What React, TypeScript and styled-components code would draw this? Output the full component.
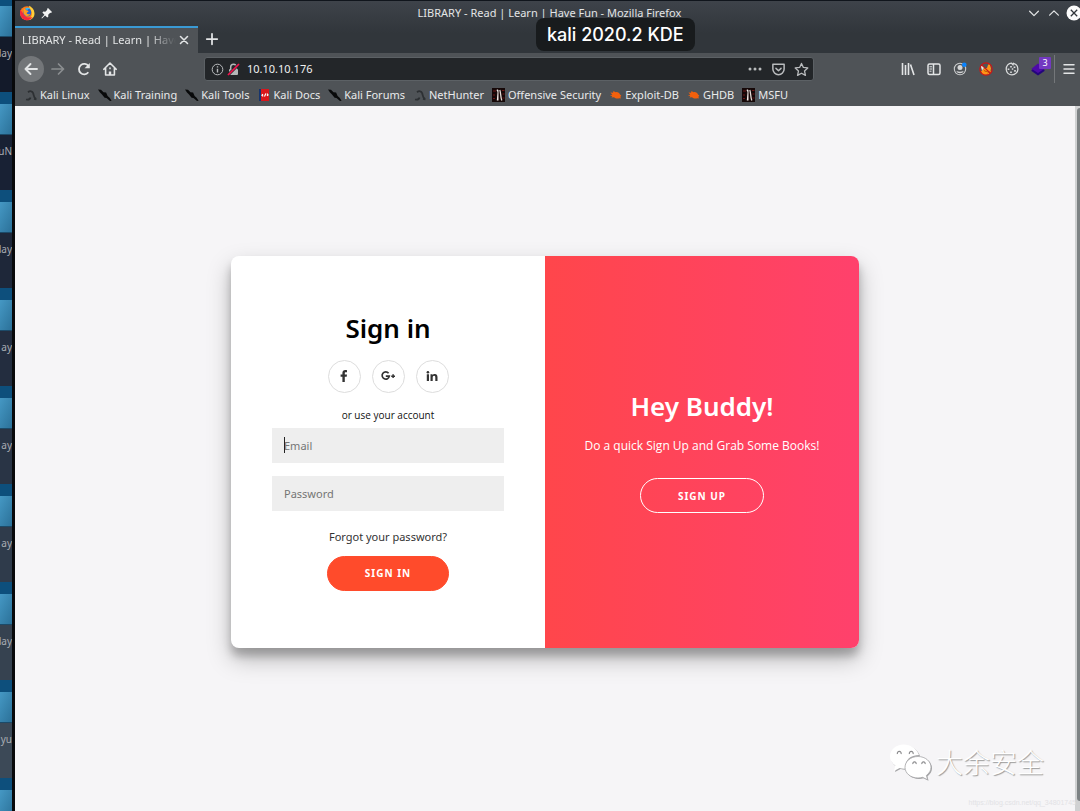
import React from "react";
import styled, { createGlobalStyle } from "styled-components";

const Global = createGlobalStyle`
  * { box-sizing: border-box; }
  body { margin: 0; font-family: "Noto Sans", "Open Sans", sans-serif; background: #f6f5f7; }
  button, input { font-family: inherit; }
  svg { display: block; flex: none; }
`;

const Screen = styled.div`
  position: relative;
  display: flex;
  min-height: 100vh;
  overflow: hidden;
`;

/* ---------- desktop behind the window ---------- */
const Desktop = styled.aside`
  flex: none;
  width: 15px;
  height: 100vh;
  overflow: hidden;
  border-right: 3px solid #08090b;
  background: #131a2a;
`;
const DesktopTile = styled.div<{ $tone: string }>`
  height: 98px;
  border-top: 12px solid #0d4f7c;
  background: ${(p) => p.$tone};
  &:first-child { height: 92px; border-top-width: 6px; }
`;
const Folder = styled.div`
  height: 31px;
  border-bottom: 1px solid #1c4a68;
  background: linear-gradient(115deg, #4598c4, #2b7199);
`;
const FolderLabel = styled.div`
  display: flex;
  justify-content: flex-end;
  padding-top: 8px;
  font-size: 10px;
  line-height: 16px;
  color: #a9adb3;
  white-space: nowrap;
`;

/* ---------- window frame ---------- */
const Window = styled.div`
  flex: 1;
  min-width: 0;
  display: flex;
  flex-direction: column;
  border-top: 1px solid #10151c;
`;
const Chrome = styled.header`
  background: linear-gradient(#3e434a, #31363b 32px);
  color: #e3e5e6;
`;
const TitleBar = styled.div`
  display: grid;
  grid-template-columns: 1fr auto 1fr;
  align-items: center;
  height: 25px;
  padding: 0 0 2px 4px;
`;
const TitleIcons = styled.div`
  display: flex;
  align-items: center;
  gap: 6px;
`;
const WindowTitle = styled.div`
  font-size: 11px;
  line-height: 16px;
  white-space: nowrap;
`;
const WindowButtons = styled.div`
  display: flex;
  justify-content: flex-end;
  align-items: center;
  gap: 5px;
  margin-right: -2px;
`;
const IconButton = styled.button<{ $w?: number }>`
  flex: none;
  display: flex;
  align-items: center;
  justify-content: center;
  width: ${(p) => p.$w ?? 16}px;
  height: 16px;
  padding: 0;
  border: 0;
  background: none;
  color: inherit;
`;
const TabBar = styled.div`
  display: flex;
  align-items: stretch;
  height: 27px;
`;
const Tab = styled.div`
  display: flex;
  align-items: center;
  width: 183px;
  padding: 0 6px 2px 7px;
  border-top: 2px solid #3a9ad4;
  background: #4f5357;
`;
const TabLabel = styled.span`
  flex: 1;
  min-width: 0;
  overflow: hidden;
  white-space: nowrap;
  font-size: 11px;
  line-height: 16px;
  mask-image: linear-gradient(90deg, #000 82%, transparent);
`;
const NewTab = styled(IconButton)`
  width: 28px;
  height: 25px;
`;
const Toolbar = styled.div`
  display: flex;
  align-items: center;
  height: 32px;
  padding: 0 3px;
  background: #4f5357;
`;
const NavGroup = styled.div`
  display: flex;
  align-items: center;
  gap: 10px;
  width: 186px;
`;
const BackButton = styled(IconButton)`
  width: 26px;
  height: 26px;
  border-radius: 50%;
  background: #737679;
  margin-right: -4px;
`;
const UrlBar = styled.div`
  flex: 1;
  display: flex;
  align-items: center;
  gap: 3px;
  height: 24px;
  padding: 0 4px 0 6px;
  border: 1px solid #5c6165;
  border-radius: 3px;
  background: #232629;
  color: #b9bbbd;
`;
const UrlInput = styled.input`
  flex: 1;
  min-width: 0;
  padding: 0 0 0 4px;
  border: 0;
  outline: 0;
  background: none;
  color: #eff0f1;
  font-size: 11px;
  line-height: 16px;
`;
const UrlActions = styled.div`
  display: flex;
  gap: 7px;
`;
const Extensions = styled.div`
  display: flex;
  align-items: center;
  gap: 10px;
  padding: 0 8px 0 86px;
`;
const BadgeHost = styled.div`
  position: relative;
`;
const Badge = styled.span`
  position: absolute;
  top: -4px;
  right: -5px;
  width: 12px;
  height: 12px;
  border-radius: 1px;
  background: #7339c1;
  color: #fff;
  font-size: 9px;
  line-height: 12px;
  text-align: center;
`;
const MenuArea = styled.div`
  display: flex;
  align-items: center;
  height: 28px;
  padding-left: 6px;
  border-left: 1px solid #74777a;
`;
const Bookmarks = styled.nav`
  display: flex;
  align-items: center;
  gap: 8px;
  height: 21px;
  padding: 0 9px 2px;
  background: #4f5357;
`;
const Bookmark = styled.a`
  display: flex;
  align-items: center;
  gap: 2px;
  color: #e9eaeb;
  font-size: 11px;
  line-height: 16px;
  white-space: nowrap;
  text-decoration: none;
`;
const HostLabel = styled.div`
  position: absolute;
  top: 18px;
  left: 50%;
  margin-left: -4px;
  padding: 4px 11px;
  border-radius: 8px;
  background: #181b1d;
  color: #fff;
  font-family: Inter, sans-serif;
  font-size: 18px;
  font-weight: 500;
  line-height: 25px;
  white-space: nowrap;
`;

/* ---------- web page ---------- */
const Viewport = styled.div`
  flex: 1;
  display: flex;
  background: #f6f5f7;
`;
const Page = styled.main`
  flex: 1;
  display: flex;
  align-items: center;
  justify-content: center;
  padding: 20px 20px 34px;
`;
const Scrollbar = styled.div`
  width: 5px;
  padding: 2px 0 10px 2px;
  background: #d0d1d2;
`;
const ScrollThumb = styled.div`
  height: 100%;
  border-radius: 3px 0 0 3px;
  background: #7d8284;
`;
const Card = styled.div`
  display: grid;
  grid-template-columns: 1fr 1fr;
  width: 100%;
  max-width: 628px;
  min-height: 392px;
  overflow: hidden;
  border-radius: 8px;
  background: #fff;
  box-shadow: 0 11px 23px rgba(0, 0, 0, 0.25), 0 8px 8px rgba(0, 0, 0, 0.22);
`;
const SignInForm = styled.form`
  display: flex;
  flex-direction: column;
  align-items: center;
  justify-content: center;
  padding: 0 41px 3px;
`;
const Heading = styled.h1`
  margin: 0;
  font-size: 26px;
  font-weight: 600;
  line-height: 36px;
`;
const Socials = styled.div`
  display: flex;
  gap: 11px;
  margin: 14px 0;
`;
const SocialLink = styled.a`
  display: flex;
  align-items: center;
  justify-content: center;
  width: 33px;
  height: 33px;
  border: 1px solid #dddddd;
  border-radius: 50%;
  color: #333;
`;
const Hint = styled.span`
  margin-bottom: 5px;
  font-family: "Open Sans", sans-serif;
  font-size: 10px;
  line-height: 16px;
  color: #111;
`;
const Field = styled.label`
  position: relative;
  display: block;
  width: 100%;
  margin-bottom: 13px;
`;
const TextInput = styled.input`
  display: block;
  width: 100%;
  height: 35px;
  padding: 0 12px;
  border: 0;
  border-radius: 0;
  background: #eee;
  font-size: 11px;
  &::placeholder { color: #757575; opacity: 1; }
`;
const Caret = styled.span`
  position: absolute;
  left: 12px;
  top: 9px;
  width: 1px;
  height: 16px;
  background: #222;
`;
const ForgotLink = styled.a`
  margin: 5px 0 11px;
  font-size: 11px;
  line-height: 16px;
  color: #333;
  text-decoration: none;
`;
const PillButton = styled.button<{ $ghost?: boolean }>`
  height: 35px;
  padding: 0 37px;
  border: 1px solid ${(p) => (p.$ghost ? "#fff" : "#ff4b2b")};
  border-radius: 18px;
  background: ${(p) => (p.$ghost ? "transparent" : "#ff4b2b")};
  color: #fff;
  font-size: 10px;
  font-weight: 700;
  letter-spacing: 1px;
`;
const Welcome = styled.section`
  display: flex;
  flex-direction: column;
  align-items: center;
  justify-content: center;
  padding-bottom: 2px;
  background: linear-gradient(to right, #ff464b, #ff416c);
  color: #fff;
`;
const WelcomeText = styled.p`
  margin: 14px 0 24px;
  font-family: "Open Sans", sans-serif;
  font-size: 12px;
  line-height: 16px;
`;

/* ---------- watermark ---------- */
const Watermark = styled.div`
  position: absolute;
  right: 36px;
  bottom: 29px;
  display: flex;
  align-items: center;
  gap: 4px;
  color: #fff;
  font-family: "Noto Sans CJK SC", sans-serif;
  font-size: 27px;
  font-weight: 300;
  line-height: 40px;
  text-shadow: 1px 1px 1px #999;
`;
const SourceUrl = styled.div`
  position: absolute;
  right: 4px;
  bottom: 2px;
  color: #e2e2e5;
  font-family: "Liberation Sans", sans-serif;
  font-size: 7px;
  line-height: 12px;
`;

type StrokeProps = { d: string; size?: number; width?: number; color?: string };
const Stroke = ({ d, size = 16, width = 1.4, color = "currentColor" }: StrokeProps) => (
  <svg width={size} height={size} viewBox="0 0 16 16" fill="none" stroke={color} strokeWidth={width} strokeLinecap="round" strokeLinejoin="round">
    <path d={d} />
  </svg>
);

const Firefox = () => (
  <svg width="16" height="16" viewBox="0 0 16 16">
    <circle cx="8" cy="8.3" r="7" fill="#ff7a1a" />
    <path d="M10 .8c3 1.500 5.500 4.200 5.500 7.700 0 4-3 6.500-6.500 6.800 3-2 4.500-5 3.500-8.500C12 4.500 10 3 10 .8z" fill="#ffd03a" />
    <path d="M1.200 4.500c-.7 4 .2 8.500 4.800 10.400 4 1 6.500-1 7.500-3-3 1.500-7.500.5-9-3z" fill="#f5293f" />
    <circle cx="8.300" cy="7.400" r="3.900" fill="#2463d1" />
    <path d="M4.800 3.500c1.400.2 2.200 1 2.900 2 1 .1 1.700.4 1.900.8-.4 1-1.900 1-2 2 1 1.400 2.400 1.200 3.900.5-1 2.700-4.800 3-6.200.6-1.200-2-.9-4-.5-5.900z" fill="#ff9f20" />
    <path d="M6 3.600c1.800-1.500 4.500-1 5.600.6-1.600-.6-2.600 0-3.600 1z" fill="#35bdf2" />
  </svg>
);
const Pin = () => (
  <svg width="12" height="12" viewBox="0 0 12 12" fill="#f2f3f3">
    <path d="M7 1l4 4-1 1-.8-.2-2 2 .1 1.900-1 .9-2.200-2.200L1 11.500l-.6-.5 3-3.300L1.400 5.500l.9-.9 2 .1 2-2L6 1.900z" />
  </svg>
);
const CloseWindow = () => (
  <svg width="16" height="16" viewBox="0 0 16 16">
    <circle cx="8" cy="8" r="7.500" fill="#fcfcfc" />
    <path d="M4.800 4.800l6.400 6.400M11.200 4.800l-6.400 6.400" stroke="#31363b" strokeWidth="1.300" />
  </svg>
);
const Home = () => (
  <svg width="16" height="16" viewBox="0 0 16 16" fill="none" stroke="currentColor" strokeWidth="1.600" strokeLinejoin="round" strokeLinecap="round">
    <path d="M1.800 8.300L8 2l6.200 6.300M3.600 7.500V14h8.800V7.500" />
    <path d="M8 14v-3.500" strokeWidth="2.400" strokeLinecap="butt" />
    <path d="M8 7v.6" />
  </svg>
);
const Reload = () => (
  <svg width="16" height="16" viewBox="0 0 16 16" fill="none" stroke="currentColor" strokeWidth="1.800">
    <path d="M12.300 11.300A5.200 5.200 0 1 1 12.500 5.200" />
    <path d="M13.800 2v5.300H8.600z" fill="currentColor" stroke="none" />
  </svg>
);
const Info = () => (
  <svg width="13" height="13" viewBox="0 0 13 13" fill="none" stroke="currentColor">
    <circle cx="6.500" cy="6.500" r="5.300" />
    <path d="M6.500 5.700v3.800M6.500 3.300v1.300" strokeWidth="1.400" />
  </svg>
);
const InsecureLock = () => (
  <svg width="13" height="13" viewBox="0 0 13 13">
    <path d="M3.700 6V4a2.800 2.800 0 0 1 5.600 0v2" fill="none" stroke="#b5b7b8" strokeWidth="1.500" />
    <rect x="2" y="6" width="9" height="6" rx="1" fill="#b5b7b8" />
    <path d="M1 12L12 1" stroke="#232629" strokeWidth="3" />
    <path d="M1 12L12 1" stroke="#f5124d" strokeWidth="1.700" />
  </svg>
);
const Dots = () => (
  <svg width="16" height="16" viewBox="0 0 16 16" fill="currentColor">
    <circle cx="3" cy="8" r="1.500" /><circle cx="8" cy="8" r="1.500" /><circle cx="13" cy="8" r="1.500" />
  </svg>
);
const Library = () => (
  <svg width="16" height="16" viewBox="0 0 16 16" fill="none" stroke="currentColor" strokeWidth="1.600">
    <path d="M2.500 2v12M5.500 4v10M8.500 2v12M10.500 3.500L14 14" />
  </svg>
);
const Sidebar = () => (
  <svg width="16" height="16" viewBox="0 0 16 16" fill="none" stroke="currentColor" strokeWidth="1.500">
    <rect x="2" y="3" width="12" height="10.500" rx="1.500" />
    <path d="M7.500 3v10.500" />
    <path d="M3.500 5.800h2.500M3.500 8h2.500M3.500 10.200h2" strokeWidth="1" />
  </svg>
);
const Account = () => (
  <svg width="16" height="16" viewBox="0 0 16 16">
    <circle cx="8" cy="8" r="5.700" fill="none" stroke="#c9cbcc" strokeWidth="1.100" />
    <circle cx="8" cy="6.500" r="2.500" fill="#d6d7d8" />
    <path d="M4.400 10c1.800 1 5.400 1 7.200 0-.8 3-6.400 3-7.200 0z" fill="#d6d7d8" />
    <circle cx="12.300" cy="3.700" r="2.300" fill="#0a84ff" />
  </svg>
);
const FoxyProxy = () => (
  <svg width="16" height="16" viewBox="0 0 16 16">
    <path d="M3 10.500l2-2 1-1 3-.5 1-3 1.500-1.500.8 2.500.7 2.500-.5 2 .5 1.500-2.500 2.500-4 .5-2.500-1z" fill="#ff9417" />
    <path d="M2.800 5l2.200.5 1 1.500-2 2.500z" fill="#f1e5d9" />
    <path d="M6 9.500l2 1 2-.5M9.500 12l2-1.500" stroke="#b45a08" strokeWidth="1" fill="none" />
    <circle cx="8" cy="8" r="6.200" fill="none" stroke="#cc1616" strokeWidth="1.200" />
    <path d="M3.600 3.600l8.800 8.800" stroke="#cc1616" strokeWidth="1.200" />
  </svg>
);
const Cookie = () => (
  <svg width="16" height="16" viewBox="0 0 16 16" fill="none" stroke="#d8dadb" strokeWidth="1.300">
    <path d="M7.500 2.200c-3 0-5.300 2.600-5.300 6 .2 3.200 2.600 5.600 5.800 5.600s5.900-2.600 5.900-5.600-1.900-5.300-4.400-5.900l-.5 1.500z" />
    <path d="M7 5v1.500M4.500 7.500V9M10.500 5.500v1.500M7 10.500V12M7.800 8h1.500M11 9v1.800" strokeWidth="1.700" />
  </svg>
);
const Layers = () => (
  <svg width="16" height="16" viewBox="0 0 16 16">
    <path d="M1.500 9L8 5l6.500 4v1L8 14.500 1.500 10z" fill="#24047c" />
    <path d="M1.500 7.700L8 2.500l6.500 5.200L8 12z" fill="#4d0aa8" />
  </svg>
);

const KaliDragon = () => (
  <svg width="14" height="14" viewBox="0 0 14 14" fill="none" stroke="#2d3033">
    <path d="M4 4.200c2-1.600 4.500-1.200 5.200 1 .7 2.300.3 4 2.600 5.600" strokeWidth="1.800" />
    <path d="M2 11.500c3 .5 4.200-.4 4.500-2" strokeWidth="1.700" />
    <path d="M10 10.800l2.500.6" strokeWidth="2" />
  </svg>
);
const KaliBlade = () => (
  <svg width="14" height="14" viewBox="0 0 14 14" fill="#08090a">
    <path d="M0 1.500l3 .3 2.500 2.500 2.600.3 1.500 3.500 2 1.700 2 3-1.600.2-3.500-3-1.900-.2L4 6.500 2 4.500z" />
  </svg>
);
const DocsBook = () => (
  <svg width="14" height="14" viewBox="0 0 14 14">
    <rect x="2" y="1" width="10" height="12" fill="#d9161c" />
    <rect x="2" y="1" width="2" height="12" fill="#16356e" />
    <path d="M6 6.200l-1 1 1.200 1.200M7.500 8.500L8.800 5.500M10 5.700l1 1.200-1 1" fill="none" stroke="#fff" strokeWidth="1.200" />
  </svg>
);
const OffSec = () => (
  <svg width="14" height="14" viewBox="0 0 14 14">
    <rect x="0" y="0" width="13" height="14" fill="#160808" />
    <path d="M1 3h3M10 2.500h2.500M1 7h2M10.500 6h2M1 10.500h2M10.500 10h2" stroke="#6d1717" strokeWidth="1.100" />
    <path d="M4.500 2c1-.8 1.700-.6 2 .2V12.500H4.800L5.500 4z" fill="#f3ece8" />
    <path d="M7.800 2c1 2 .6 7 2 10.500" fill="none" stroke="#e3d9d5" strokeWidth="1.300" />
  </svg>
);
const Bug = () => (
  <svg width="14" height="14" viewBox="0 0 14 14" fill="#f2600c">
    <path d="M1.500 4.500l2.500.2L4.500 3l2 1.200c2-.5 4 .6 4.500 2.300l1.300 1-.8 1 .3 2-1.500-.3c-1.600.6-4 .4-5.300-.9l-2.500.2.800-1.400L.8 7.500l2.500-.8z" />
  </svg>
);

const Facebook = () => (
  <svg width="14" height="14" viewBox="0 0 14 14" fill="currentColor">
    <path d="M10 1.200v2H8.800c-.8 0-1 .4-1 1v1.400H10l-.3 2.200H7.800V13H5.400V7.800H3.600V5.600h1.800V3.900C5.400 2 6.500 1 8.200 1c.8 0 1.500.1 1.800.2z" />
  </svg>
);
const GooglePlus = () => (
  <svg width="16" height="14" viewBox="0 0 16 14" fill="none" stroke="currentColor" strokeWidth="1.700">
    <path d="M8.600 4.300A3.600 3.600 0 1 0 9.300 7.100H5.800" />
    <path d="M11.200 7.200h3.800M13.100 5.300v3.800" strokeWidth="1.500" />
  </svg>
);
const LinkedIn = () => (
  <svg width="14" height="14" viewBox="0 0 14 14" fill="currentColor">
    <circle cx="2.900" cy="3.200" r="1.300" />
    <path d="M1.800 5.200H4V12H1.800zM5.500 5.200h2.100v1c.4-.7 1.100-1.200 2.200-1.200 2.100 0 2.700 1.300 2.700 3.200V12h-2.200V8.500c0-.9-.2-1.700-1.200-1.700s-1.400.7-1.400 1.700V12H5.500z" />
  </svg>
);
const WeChat = () => (
  <svg width="44" height="40" viewBox="0 0 44 40" fill="#fff">
    <path d="M16.500 3.500C9 3.500 3 8.700 3 15.300c0 4 2 7 5.300 9.200L7 30l5.600-3c2 .6 4 .8 6.400.6-2-8 4-13.500 13-13.700C29.500 7.500 23.500 3.500 16.500 3.500z" fill="#a5a5a7" />
    <path d="M15.500 2.500C8 2.500 2 7.700 2 14.300c0 4 2 7 5.300 9.200L6 29l5.600-3c2 .6 4 .8 6.400.6-2-8 4-13.500 13-13.700C28.500 6.500 22.500 2.500 15.500 2.500z" />
    <path d="M31 15.500c-7.300 0-13 4.800-13 10.800S23.700 37 31 37c1.600 0 3.200-.2 4.600-.7l5 2.500-1.200-4.400c3-2.200 4.600-5 4.600-8.100 0-6-5.700-10.800-13-10.800z" fill="#a5a5a7" />
    <path d="M30 14.500c-7.300 0-13 4.800-13 10.800S22.700 36 30 36c1.600 0 3.200-.2 4.600-.7l5 2.500-1.200-4.400c3-2.200 4.600-5 4.600-8.100 0-6-5.700-10.800-13-10.800z" stroke="#a5a5a7" strokeWidth=".8" />
    <g fill="none" stroke="#8c8c8e" strokeWidth="1.200">
      <path d="M9.500 12a1.900 1.900 0 1 1 3.500 0M21.500 12a1.900 1.900 0 1 1 3.500 0M25 22a1.600 1.600 0 1 1 3 0M34 22a1.600 1.600 0 1 1 3 0" />
    </g>
  </svg>
);

const folders = [
  { label: "day", tone: "#131a2a" },
  { label: "uN", tone: "#182134" },
  { label: "day", tone: "#1e2739" },
  { label: "ay", tone: "#232d3f" },
  { label: "ay", tone: "#293445" },
  { label: "ay", tone: "#2f3b4b" },
  { label: "day", tone: "#364250" },
  { label: "yu", tone: "#3c4957" },
  { label: "", tone: "#42505e" },
];
const bookmarks = [
  { label: "Kali Linux", Icon: KaliDragon },
  { label: "Kali Training", Icon: KaliBlade },
  { label: "Kali Tools", Icon: KaliBlade },
  { label: "Kali Docs", Icon: DocsBook },
  { label: "Kali Forums", Icon: KaliBlade },
  { label: "NetHunter", Icon: KaliDragon },
  { label: "Offensive Security", Icon: OffSec },
  { label: "Exploit-DB", Icon: Bug },
  { label: "GHDB", Icon: Bug },
  { label: "MSFU", Icon: OffSec },
];

export default function App() {
  return (
    <Screen>
      <Global />
      <Desktop aria-hidden="true">
        {folders.map((f, i) => (
          <DesktopTile key={i} $tone={f.tone}>
            <Folder />
            <FolderLabel>{f.label}</FolderLabel>
          </DesktopTile>
        ))}
      </Desktop>
      <Window>
        <Chrome>
          <TitleBar>
            <TitleIcons><Firefox /><Pin /></TitleIcons>
            <WindowTitle>LIBRARY - Read | Learn | Have Fun - Mozilla Firefox</WindowTitle>
            <WindowButtons>
              <IconButton aria-label="Minimize"><Stroke d="M3 6l5 5 5-5" size={14} /></IconButton>
              <IconButton $w={14} aria-label="Maximize"><Stroke d="M3 10.500l5-5 5 5" size={14} /></IconButton>
              <IconButton aria-label="Close window"><CloseWindow /></IconButton>
            </WindowButtons>
          </TitleBar>
          <TabBar>
            <Tab>
              <TabLabel>LIBRARY - Read | Learn | Have Fun</TabLabel>
              <IconButton aria-label="Close tab"><Stroke d="M4 4l8 8M12 4l-8 8" width={1.8} size={14} /></IconButton>
            </Tab>
            <NewTab aria-label="New tab"><Stroke d="M8 2v12M2 8h12" width={2} size={14} /></NewTab>
          </TabBar>
          <Toolbar>
            <NavGroup>
              <BackButton aria-label="Back"><Stroke d="M14 8H2.500M7.500 3l-5 5 5 5" width={1.9} /></BackButton>
              <IconButton aria-label="Forward"><Stroke d="M2 8h11.500M8.500 3l5 5-5 5" width={1.7} color="#8b8e90" /></IconButton>
              <IconButton aria-label="Reload"><Reload /></IconButton>
              <IconButton aria-label="Home"><Home /></IconButton>
            </NavGroup>
            <UrlBar>
              <Info />
              <InsecureLock />
              <UrlInput aria-label="Address" defaultValue="10.10.10.176" />
              <UrlActions>
                <IconButton aria-label="Page actions"><Dots /></IconButton>
                <IconButton aria-label="Save to Pocket"><Stroke d="M2 2.500h12v5a6 6 0 0 1-12 0zM5.300 6.800L8 9.300l2.700-2.500" width={1.6} size={15} /></IconButton>
                <IconButton aria-label="Bookmark"><Stroke d="M8 1.500l2 4.300 4.700.5-3.500 3.200 1 4.800L8 12l-4.200 2.300 1-4.800-3.500-3.200 4.700-.5z" size={15} /></IconButton>
              </UrlActions>
            </UrlBar>
            <Extensions>
              <IconButton aria-label="Library"><Library /></IconButton>
              <IconButton aria-label="Sidebars"><Sidebar /></IconButton>
              <IconButton aria-label="Account"><Account /></IconButton>
              <IconButton aria-label="FoxyProxy"><FoxyProxy /></IconButton>
              <IconButton aria-label="Cookies"><Cookie /></IconButton>
              <BadgeHost>
                <IconButton aria-label="Wappalyzer"><Layers /></IconButton>
                <Badge>3</Badge>
              </BadgeHost>
            </Extensions>
            <MenuArea>
              <IconButton aria-label="Menu"><Stroke d="M3 3.800h10M3 8h10M3 12.200h10" width={1.5} /></IconButton>
            </MenuArea>
          </Toolbar>
          <Bookmarks>
            {bookmarks.map(({ label, Icon }) => (
              <Bookmark key={label} href="#"><Icon />{label}</Bookmark>
            ))}
          </Bookmarks>
        </Chrome>
        <Viewport>
          <Page>
            <Card>
              <SignInForm>
                <Heading>Sign in</Heading>
                <Socials>
                  <SocialLink href="#" aria-label="Facebook"><Facebook /></SocialLink>
                  <SocialLink href="#" aria-label="Google Plus"><GooglePlus /></SocialLink>
                  <SocialLink href="#" aria-label="LinkedIn"><LinkedIn /></SocialLink>
                </Socials>
                <Hint>or use your account</Hint>
                <Field>
                  <TextInput type="email" aria-label="Email" placeholder="Email" />
                  <Caret />
                </Field>
                <Field>
                  <TextInput type="password" aria-label="Password" placeholder="Password" />
                </Field>
                <ForgotLink href="#">Forgot your password?</ForgotLink>
                <PillButton type="button">SIGN IN</PillButton>
              </SignInForm>
              <Welcome>
                <Heading>Hey Buddy!</Heading>
                <WelcomeText>Do a quick Sign Up and Grab Some Books!</WelcomeText>
                <PillButton type="button" $ghost>SIGN UP</PillButton>
              </Welcome>
            </Card>
          </Page>
          <Scrollbar><ScrollThumb /></Scrollbar>
        </Viewport>
      </Window>
      <HostLabel>kali 2020.2 KDE</HostLabel>
      <Watermark><WeChat />大余安全</Watermark>
      <SourceUrl>https://blog.csdn.net/qq_34801745</SourceUrl>
    </Screen>
  );
}
